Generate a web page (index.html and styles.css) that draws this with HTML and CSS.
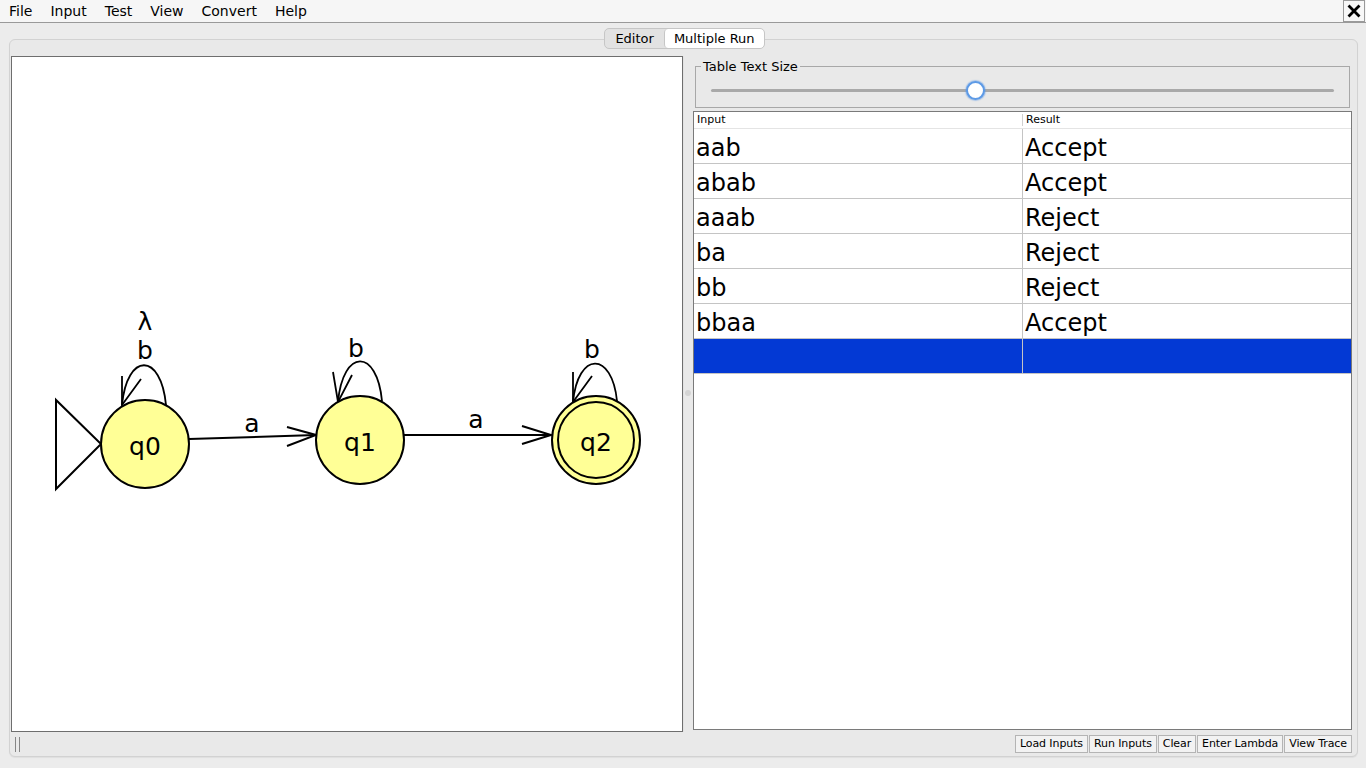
FILE: index.html
```html
<!DOCTYPE html>
<html>
<head>
<meta charset="utf-8">
<title>JFLAP - Multiple Run</title>
<link rel="stylesheet" href="styles.css">
</head>
<body>
<div class="menubar">
  <span class="menu">File</span>
  <span class="menu">Input</span>
  <span class="menu">Test</span>
  <span class="menu">View</span>
  <span class="menu">Convert</span>
  <span class="menu">Help</span>
  <div class="close">
    <svg width="14" height="14" viewBox="0 0 14 14"><path d="M2.5 2.5 L11.5 11.5 M11.5 2.5 L2.5 11.5" stroke="#000" stroke-width="2.8" stroke-linecap="square"/></svg>
  </div>
</div>
<div class="frame">
  <div class="tabs">
    <div class="tabgroup">
      <span class="tab">Editor</span>
      <span class="tab sel">Multiple Run</span>
    </div>
  </div>
  <div class="pane">
    <div class="split">
      <div class="canvas">
        <svg class="diagram" width="670" height="673" viewBox="0 0 670 673">
          <g transform="translate(-12,-57)" fill="none" stroke="#000" stroke-width="2">
            <polygon points="56,400 56,489 101,444" fill="#fff"/>
            <path d="M189,439 L316,435"/>
            <path d="M287,427 L316,435 L287,446"/>
            <path d="M404,435 L551,435"/>
            <path d="M522,426 L551,435 L522,444"/>
            <path d="M166,405 C161,352 127,352 122,405" stroke-width="1.8"/>
            <path d="M122,376 L122,405 L141,379" stroke-width="1.8"/>
            <path d="M382,401 C377,348 343,348 338,402" stroke-width="1.8"/>
            <path d="M333,372 L338,402 L352,375" stroke-width="1.8"/>
            <path d="M617,401 C612,351 578,351 573,402" stroke-width="1.8"/>
            <path d="M573,372 L573,402 L592,376" stroke-width="1.8"/>
            <circle cx="145" cy="444" r="44" fill="#ffff96"/>
            <circle cx="360" cy="440" r="44" fill="#ffff96"/>
            <circle cx="596" cy="440" r="44" fill="#ffff96"/>
            <circle cx="596" cy="440" r="38"/>
          </g>
          <g transform="translate(-12,-57)" class="lbl">
            <text x="145" y="455" text-anchor="middle">q0</text>
            <text x="360" y="451" text-anchor="middle">q1</text>
            <text x="596" y="451" text-anchor="middle">q2</text>
            <text x="252" y="432" text-anchor="middle">a</text>
            <text x="476" y="428" text-anchor="middle">a</text>
            <text x="145" y="359" text-anchor="middle">b</text>
            <text x="145" y="330" text-anchor="middle">λ</text>
            <text x="356" y="357" text-anchor="middle">b</text>
            <text x="592" y="358" text-anchor="middle">b</text>
          </g>
        </svg>
      </div>
      <div class="divider"><span class="dot"></span></div>
      <div class="right">
        <fieldset class="sizebox">
          <legend>Table Text Size</legend>
          <div class="slider">
            <div class="track"></div>
            <div class="thumb"></div>
          </div>
        </fieldset>
        <div class="table">
          <div class="row head"><div class="c1">Input</div><div class="c2">Result</div></div>
          <div class="row"><div class="c1">aab</div><div class="c2">Accept</div></div>
          <div class="row"><div class="c1">abab</div><div class="c2">Accept</div></div>
          <div class="row"><div class="c1">aaab</div><div class="c2">Reject</div></div>
          <div class="row"><div class="c1">ba</div><div class="c2">Reject</div></div>
          <div class="row"><div class="c1">bb</div><div class="c2">Reject</div></div>
          <div class="row"><div class="c1">bbaa</div><div class="c2">Accept</div></div>
          <div class="row selected"><div class="c1"></div><div class="c2"></div></div>
        </div>
      </div>
    </div>
    <div class="statusbar">
      <span class="grip"></span>
      <div class="buttons">
        <span class="btn">Load Inputs</span>
        <span class="btn">Run Inputs</span>
        <span class="btn">Clear</span>
        <span class="btn">Enter Lambda</span>
        <span class="btn">View Trace</span>
      </div>
    </div>
  </div>
</div>
</body>
</html>
```

FILE: styles.css
```css
* { box-sizing: border-box; }
html, body {
  margin: 0;
  padding: 0;
  width: 1366px;
  height: 768px;
  overflow: hidden;
  background: #ececec;
  font-family: "DejaVu Sans", "Liberation Sans", sans-serif;
  color: #000;
}

.menubar {
  height: 23px;
  background: #f6f6f6;
  border-bottom: 1px solid #9a9a9a;
  display: flex;
  align-items: center;
}
.menu {
  font-size: 14px;
  line-height: 22px;
  padding: 0 9px;
}
.close {
  margin-left: auto;
  margin-right: 1px;
  width: 22px;
  height: 22px;
  border: 1px solid #9a9a9a;
  background: #f8f8f8;
  display: flex;
  align-items: center;
  justify-content: center;
  align-self: flex-start;
}

.frame {
  padding: 5px 8px 0 9px;
}
.tabs {
  display: flex;
  justify-content: center;
  position: relative;
  z-index: 1;
  height: 21px;
  padding-left: 2px;
}
.tabgroup {
  display: flex;
  border: 1px solid #c6c6c6;
  border-radius: 5px;
  background: #e2e2e2;
  height: 21px;
  overflow: hidden;
}
.tab {
  font-size: 13px;
  line-height: 19px;
  padding: 0 10px;
}
.tab.sel {
  background: #fff;
  border-left: 1px solid #c6c6c6;
  border-radius: 4px;
  padding: 0 9px;
}

.pane {
  margin-top: -10px;
  height: 718px;
  border: 1px solid #d2d2d2;
  border-radius: 6px;
  background: #e9e9e9;
  padding: 16px 0 0 1px;
  display: flex;
  flex-direction: column;
  box-shadow: 0 1px 1px rgba(0,0,0,0.06);
}
.split {
  display: flex;
  height: 676px;
}
.canvas {
  width: 672px;
  height: 676px;
  border: 1px solid #6e6e6e;
  background: #fff;
  overflow: hidden;
}
.diagram { display: block; }
.lbl text {
  font-family: "DejaVu Sans", sans-serif;
  font-size: 25px;
  fill: #000;
}

.divider {
  width: 9px;
  display: flex;
  align-items: center;
  justify-content: center;
  border-left: 1px solid #e2e2e2;
}
.dot {
  width: 6px;
  height: 6px;
  border-radius: 50%;
  background: #d4d4d4;
  margin-top: -2px;
}

.right {
  flex: 1;
  display: flex;
  flex-direction: column;
}
.sizebox {
  margin: 3px 7px 0 3px;
  padding: 0 15px 0 15px;
  border: 1px solid #a8a8a8;
  height: 49px;
  min-width: 0;
}
.sizebox legend {
  font-size: 13px;
  line-height: 15px;
  padding: 0 2px;
  margin-left: -10px;
}
.slider {
  position: relative;
  height: 32px;
}
.track {
  position: absolute;
  left: 0;
  right: 0;
  top: 15px;
  height: 3px;
  border-radius: 2px;
  background: #a9a9a9;
}
.thumb {
  position: absolute;
  left: calc(42.35% - 9px);
  top: 7px;
  width: 19px;
  height: 19px;
  border-radius: 50%;
  background: #fff;
  border: 2px solid #5d9ae6;
  box-shadow: 0 0 1px 1px rgba(93,154,230,0.45);
}

.table {
  margin: 3px 5px 2px 1px;
  flex: 1;
  border: 1px solid #7a7a7a;
  background: #fff;
}
.row {
  display: grid;
  grid-template-columns: 328px 1fr;
  height: 35px;
  border-bottom: 1px solid #c4c4c4;
}
.row .c1, .row .c2 {
  font-size: 24px;
  line-height: 38px;
  height: 34px;
  padding-left: 2px;
  overflow: hidden;
  white-space: nowrap;
}
.row .c2 {
  border-left: 1px solid #c4c4c4;
}
.row.head {
  height: 17px;
  border-bottom: 1px solid #e4e4e4;
}
.row.head .c1, .row.head .c2 {
  font-size: 11px;
  line-height: 16px;
  height: 16px;
  padding-left: 3px;
}
.row.head .c2 {
  border-left: 1px solid #d0d0d0;
  margin: 2px 0;
  line-height: 12px;
  height: 12px;
}
.row.selected {
  background: #0339d4;
}

.statusbar {
  height: 24px;
  display: flex;
  align-items: center;
  padding-left: 4px;
}
.grip {
  width: 5px;
  height: 15px;
  border-left: 1px solid #858585;
  border-right: 1px solid #858585;
}
.buttons {
  margin-left: auto;
  margin-right: 5px;
  display: flex;
  gap: 1px;
  margin-top: 0;
}
.btn {
  font-size: 11px;
  line-height: 16px;
  height: 18px;
  padding: 0 4px;
  border: 1px solid #b4b4b4;
  background: #f2f2f2;
  letter-spacing: -0.1px;
}
```
